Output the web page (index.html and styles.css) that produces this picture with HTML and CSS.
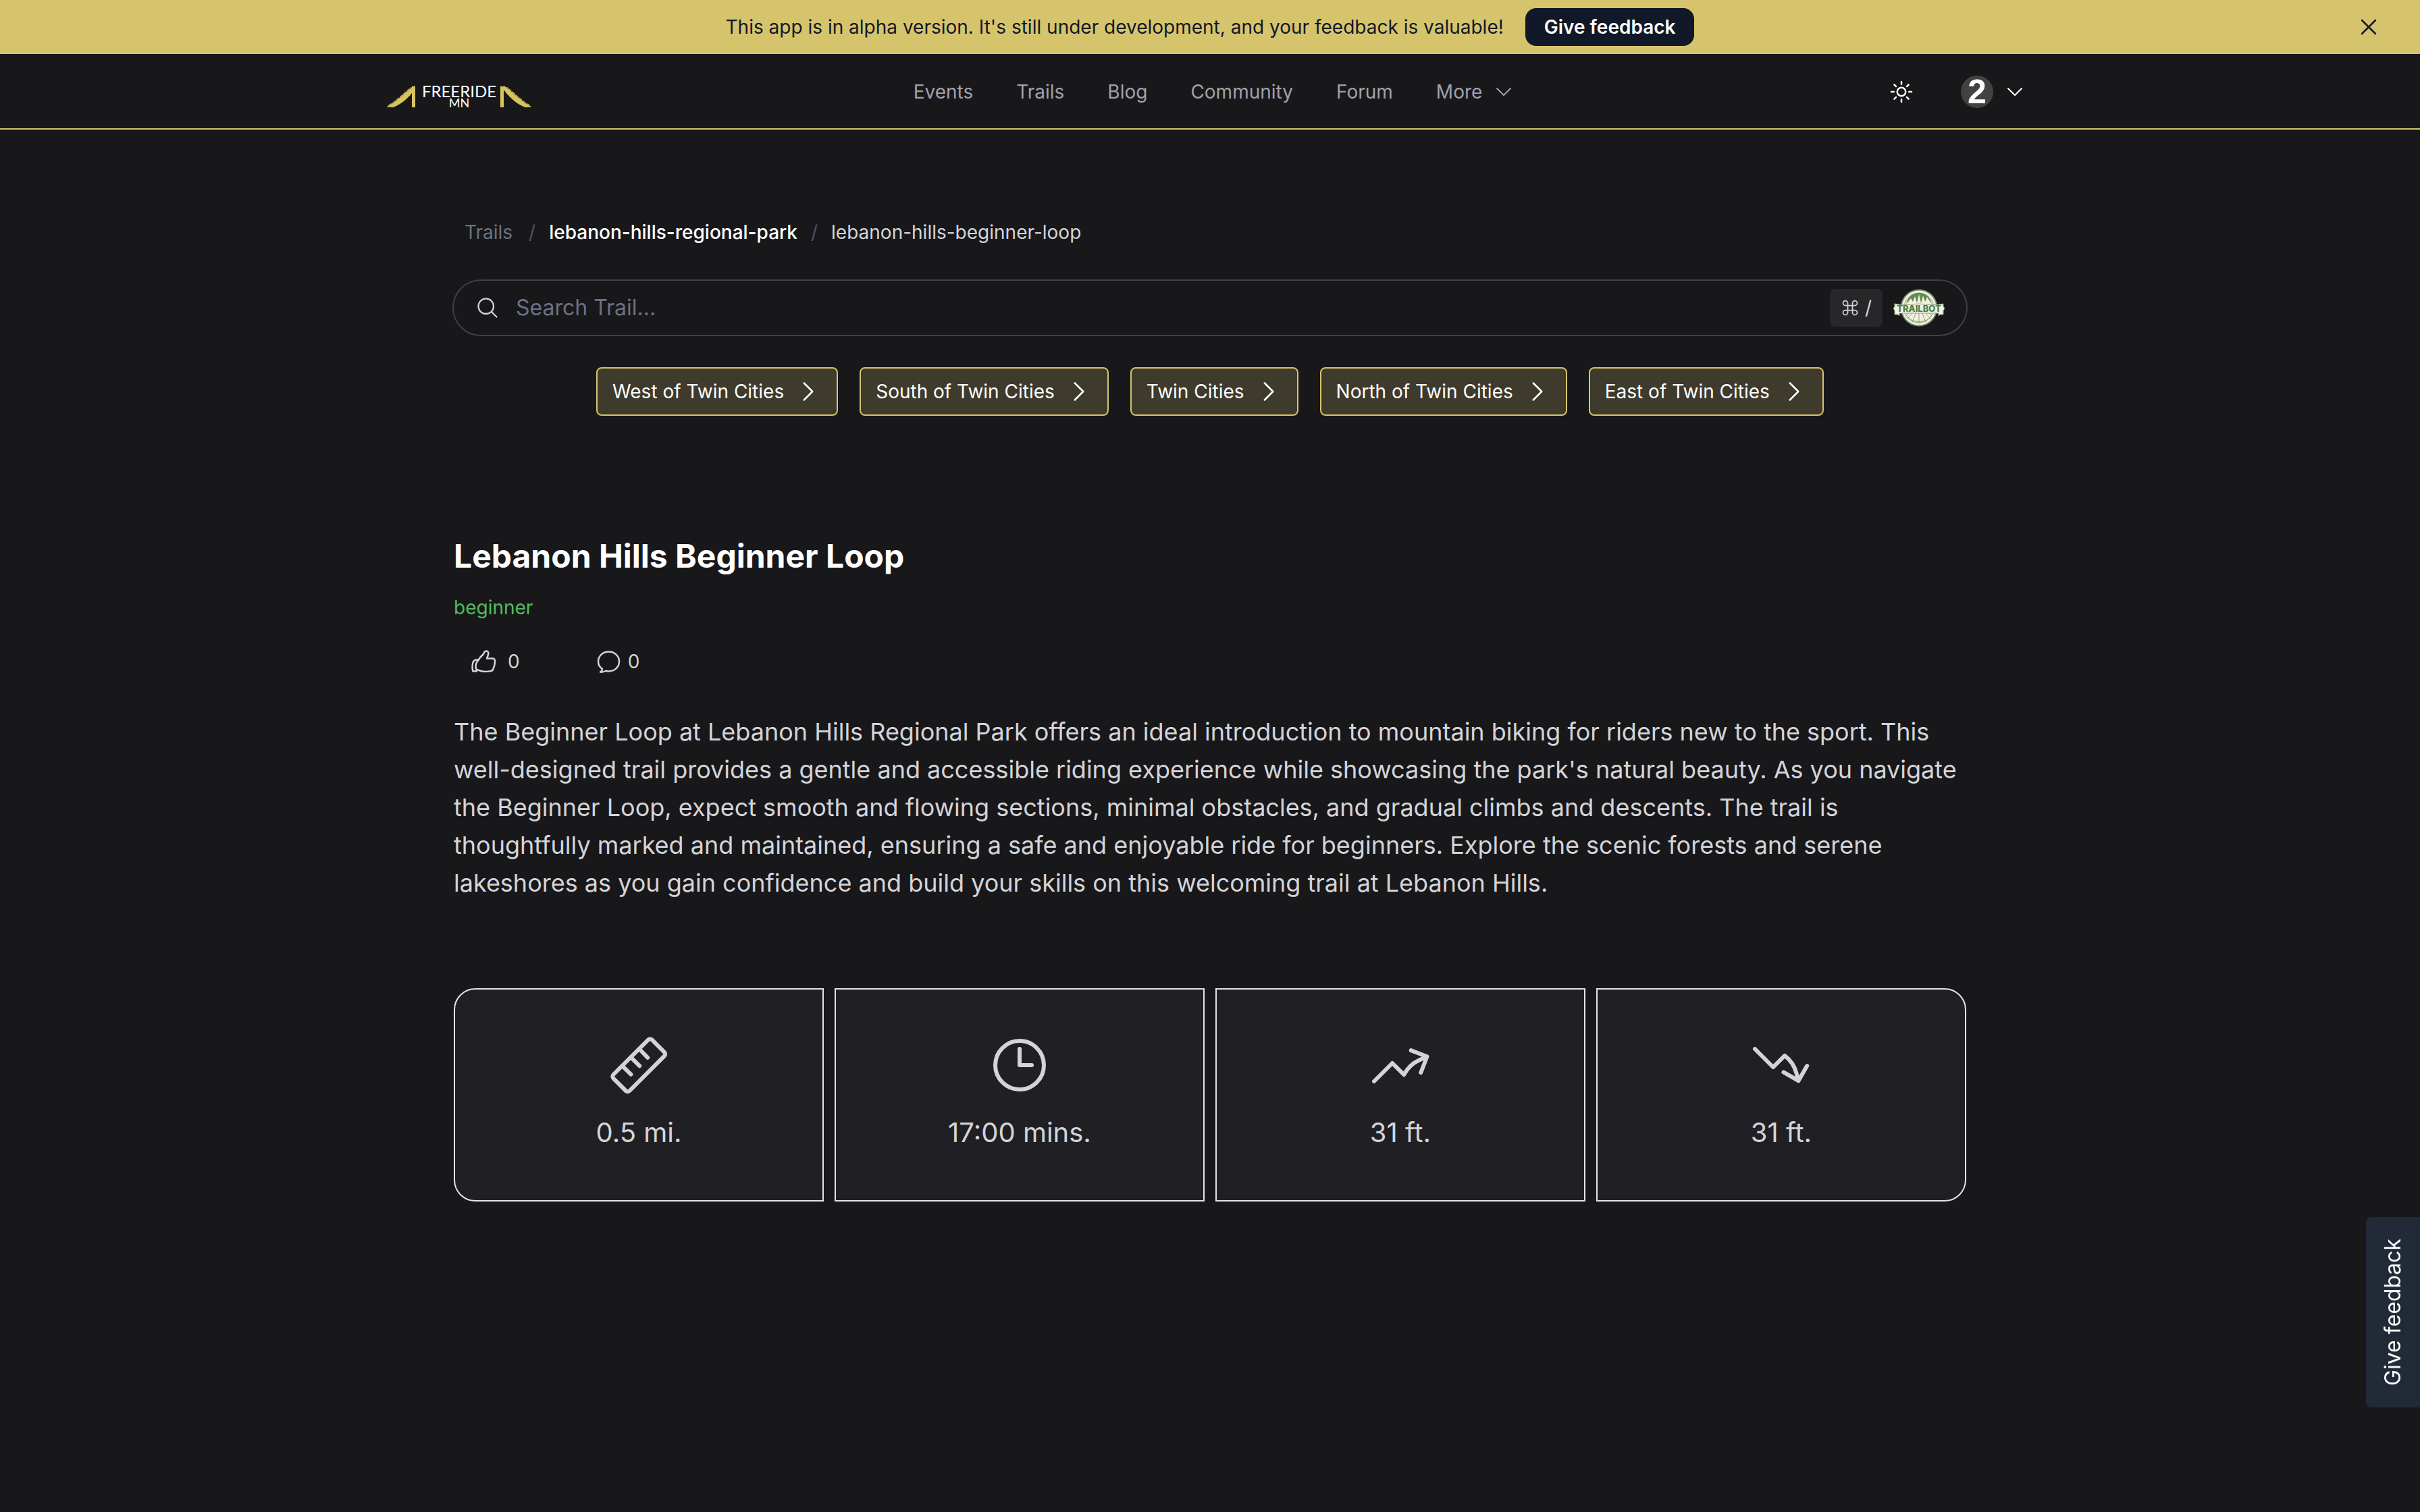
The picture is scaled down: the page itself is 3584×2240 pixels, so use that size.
FILE: index.html
```html
<!DOCTYPE html>
<html lang="en">
<head>
<meta charset="utf-8">
<title>Lebanon Hills Beginner Loop</title>
<link rel="stylesheet" href="styles.css">
</head>
<body>
<div class="banner">
  <p class="banner-text">This app is in alpha version. It's still under development, and your feedback is valuable!</p>
  <button class="banner-button" type="button">Give feedback</button>
  <button class="banner-close" type="button" aria-label="Dismiss">
    <svg class="icon-40" viewBox="0 0 24 24"><path d="M6 18 18 6M6 6l12 12"/></svg>
  </button>
</div>
<header class="header">
  <div class="header-inner">
    <a class="logo" href="#" aria-label="Freeride MN">
      <svg class="logo-art" viewBox="0 -8 240 48">
        <g fill="#d8c45f">
          <path d="M12 32.500C24 27 36 15 50 3.500L54 1V7C46 18 34 29 22 33Z"/>
          <path d="M50 2h5v31h-5z"/>
          <path d="M228 32.500C216 27 204 15 190 3.500L186 1V7C194 18 206 29 218 33Z"/>
          <path d="M181 2h5v31h-5z"/>
        </g>
        <path d="M16 30l7-4 6-5 7-6 8-7 5-4M224 30l-7-4-6-5-7-6-8-7-5-4" fill="none" stroke="#b8a552" stroke-width="2" stroke-dasharray="4 3"/>
        <text class="logo-name" x="120" y="18" text-anchor="middle">FREERIDE</text>
        <text class="logo-state" x="120" y="33" text-anchor="middle">MN</text>
      </svg>
    </a>
    <nav class="nav">
      <a href="#">Events</a>
      <a href="#">Trails</a>
      <a href="#">Blog</a>
      <a href="#">Community</a>
      <a href="#">Forum</a>
      <button class="nav-more" type="button">More
        <svg class="icon-32" viewBox="0 0 24 24"><path d="m19.500 8.250-7.500 7.500-7.500-7.500"/></svg>
      </button>
    </nav>
    <div class="account">
      <button class="plain" type="button" aria-label="Switch theme">
        <svg class="icon-40" viewBox="0 0 24 24"><path d="M12 3v2.250m6.364.386-1.591 1.591M21 12h-2.250m-.386 6.364-1.591-1.591M12 18.750V21m-4.773-4.227-1.591 1.591M5.250 12H3m4.227-4.773L5.636 5.636M15.750 12a3.750 3.750 0 1 1-7.500 0 3.750 3.750 0 0 1 7.500 0Z"/></svg>
      </button>
      <button class="plain profile" type="button" aria-label="Account menu">
        <span class="avatar">2</span>
        <svg class="icon-32" viewBox="0 0 24 24"><path d="m19.500 8.250-7.500 7.500-7.500-7.500"/></svg>
      </button>
    </div>
  </div>
</header>
<main class="main">
  <nav class="crumbs" aria-label="Breadcrumb">
    <a class="crumb-root" href="#">Trails</a>
    <span class="slash">/</span>
    <a class="crumb-park" href="#">lebanon-hills-regional-park</a>
    <span class="slash">/</span>
    <a class="crumb-here" href="#">lebanon-hills-beginner-loop</a>
  </nav>
  <form class="search">
    <label class="search-label" for="trail-search" aria-label="Search Trail">
      <svg class="icon-36" viewBox="0 0 24 24"><path d="m21 21-5.197-5.197m0 0A7.500 7.500 0 1 0 5.196 5.196a7.500 7.500 0 0 0 10.607 10.607Z"/></svg>
    </label>
    <input class="search-input" id="trail-search" type="text" placeholder="Search Trail...">
    <kbd class="shortcut">
      <svg class="command" viewBox="0 0 24 24"><path d="M9 9V6a3 3 0 1 0-3 3h12a3 3 0 1 0-3-3v12a3 3 0 1 0 3-3H6a3 3 0 1 0 3 3V9"/></svg>
      <span>/</span>
    </kbd>
    <button class="plain" type="button" aria-label="Trailbot">
      <svg class="trailbot" viewBox="0 0 76 56">
        <circle cx="38" cy="28" r="26" fill="#f4f0e2"/>
        <circle cx="38" cy="28" r="26.500" fill="none" stroke="#6f9160" stroke-width="2" stroke-dasharray="2 2"/>
        <circle cx="38" cy="28" r="22" fill="none" stroke="#7f9c70" stroke-width="1"/>
        <path d="M19 22C22 11 29 6 38 6s16 5 19 16l-4-5-3-5-3 7-3-9-3 11-3-13-3 13-3-10-3 8-3-5-3 4z" fill="#5f8a50" stroke="none"/>
        <path d="M38 34v17M34 34l-6 15M42 34l6 15M30 34l-9 10M46 34l9 10M26 34l-7 5M50 34l7 5M20 41c9 10 27 10 36 0" fill="none" stroke="#8ba57c" stroke-width="1"/>
        <path d="M2 22q12 3 36 0 24 3 36 0v4l2 3-2 3v6h-5l-2 2v-4H9v4l-2-2H2v-6l-2-3 2-3z" fill="#f4f0e2" stroke="#8ba57c" stroke-width="1"/>
        <text class="trailbot-name" x="38" y="34" text-anchor="middle">TRAILBOT</text>
      </svg>
    </button>
  </form>
  <div class="regions">
    <button class="region" type="button">West of Twin Cities <svg class="icon-40" viewBox="0 0 24 24"><path d="m8.250 4.500 7.500 7.500-7.500 7.500"/></svg></button>
    <button class="region" type="button">South of Twin Cities <svg class="icon-40" viewBox="0 0 24 24"><path d="m8.250 4.500 7.500 7.500-7.500 7.500"/></svg></button>
    <button class="region" type="button">Twin Cities <svg class="icon-40" viewBox="0 0 24 24"><path d="m8.250 4.500 7.500 7.500-7.500 7.500"/></svg></button>
    <button class="region" type="button">North of Twin Cities <svg class="icon-40" viewBox="0 0 24 24"><path d="m8.250 4.500 7.500 7.500-7.500 7.500"/></svg></button>
    <button class="region" type="button">East of Twin Cities <svg class="icon-40" viewBox="0 0 24 24"><path d="m8.250 4.500 7.500 7.500-7.500 7.500"/></svg></button>
  </div>
  <article class="trail">
    <h1 class="title">Lebanon Hills Beginner Loop</h1>
    <p class="level">beginner</p>
    <div class="reactions">
      <button class="plain reaction" type="button" aria-label="Like, 0">
        <svg class="reaction-icon" viewBox="-2 -3 40 40" stroke-width="2.500"><path d="M11 14.500C12 11.500 15 9 17.500 6.500 19 5 19 1.500 22 1.500c3 0 4 2.500 3 5.500l-2 5.500h8c3 0 4 1 4 4 0 5-1.500 10-4 14-4 1.500-12 2-17 .500-2-.500-4-2-6-2M11 14.500H7C3 15 1.500 20 1.500 25c0 3 .500 5 1 6.500H8L7.500 29C5.500 25 6.500 18 11 14.500"/></svg>
        <span>0</span>
      </button>
      <button class="plain comment" type="button" aria-label="Comments, 0">
        <svg class="reaction-icon" viewBox="-2 -3 40 40" stroke-width="2.500"><path d="M8 28C4.500 25.500 2 21.500 2 17 2 8.500 9 2.500 17.500 2.500S33 8.500 33 17s-7 14.500-15.500 14.500c-1.500 0-3 0-4.500-.500-2 1-5 2-8 1.500 2-1 3-2.500 3-4.500Z"/></svg>
        <span>0</span>
      </button>
    </div>
    <p class="description">The Beginner Loop at Lebanon Hills Regional Park offers an ideal introduction to mountain biking for riders new to the sport. This well-designed trail provides a gentle and accessible riding experience while showcasing the park's natural beauty. As you navigate the Beginner Loop, expect smooth and flowing sections, minimal obstacles, and gradual climbs and descents. The trail is thoughtfully marked and maintained, ensuring a safe and enjoyable ride for beginners. Explore the scenic forests and serene lakeshores as you gain confidence and build your skills on this welcoming trail at Lebanon Hills.</p>
    <ul class="stats">
      <li class="stat">
        <svg class="icon-96" viewBox="0 0 24 24"><path d="M15.500 2.600a1 1 0 0 1 1.400 0l4.600 4.600a1 1 0 0 1 0 1.400L8.600 21.500a1 1 0 0 1-1.400 0L2.600 16.900a1 1 0 0 1 0-1.400ZM5.900 12.300l3.200 3.100M9.100 9.100l3.200 3.200M12.200 6l3.100 3.200"/></svg>
        <span>0.5 mi.</span>
      </li>
      <li class="stat">
        <svg class="icon-96" viewBox="0 0 24 24"><path d="M12 6v6h4.500m4.500 0a9 9 0 1 1-18 0 9 9 0 0 1 18 0Z"/></svg>
        <span>17:00 mins.</span>
      </li>
      <li class="stat">
        <svg class="icon-96" viewBox="0 0 24 24"><path d="M2.250 18 9 11.250l4.306 4.306a11.950 11.950 0 0 1 5.814-5.518l2.740-1.220m0 0-5.940-2.281m5.940 2.280-2.280 5.941"/></svg>
        <span>31 ft.</span>
      </li>
      <li class="stat">
        <svg class="icon-96" viewBox="0 0 24 24"><path d="M2.250 6 9 12.750l4.286-4.286a11.948 11.948 0 0 1 4.306 6.430l.776 2.898m0 0 3.182-5.511m-3.182 5.510-5.511-3.181"/></svg>
        <span>31 ft.</span>
      </li>
    </ul>
  </article>
</main>
<button class="feedback-tab" type="button">Give feedback</button>
</body>
</html>
```
FILE: styles.css
```css
* {
  box-sizing: border-box;
}

body {
  margin: 0;
  min-height: 100vh;
  background: #18181b;
  color: #d4d4d8;
  font-family: Inter, "Liberation Sans", sans-serif;
  font-size: 28px;
  line-height: 40px;
}

h1, p, ul {
  margin: 0;
  padding: 0;
}

a {
  color: inherit;
  text-decoration: none;
}

button, input, kbd {
  font: inherit;
  color: inherit;
}

svg {
  display: block;
  flex: none;
  fill: none;
  stroke: currentColor;
  stroke-linecap: round;
  stroke-linejoin: round;
}

.icon-32 { width: 32px; height: 32px; }
.icon-36 { width: 36px; height: 36px; }
.icon-40 { width: 40px; height: 40px; }
.icon-96 { width: 96px; height: 96px; }

.icon-32, .icon-36, .icon-40, .icon-96, .command {
  stroke-width: 1.5;
}

.plain {
  padding: 0;
  border: 0;
  background: none;
}

/* Alpha notice */
.banner {
  position: relative;
  display: flex;
  align-items: center;
  justify-content: center;
  gap: 32px;
  padding: 12px 56px;
  background: #d6c46d;
  color: #111827;
}

.banner-button {
  padding: 8px 28px;
  border: 0;
  border-radius: 16px;
  background: #111827;
  color: #fff;
  font-weight: 600;
}

.banner-close {
  position: absolute;
  top: 20px;
  right: 56px;
  padding: 0;
  border: 0;
  background: none;
}

/* Site header */
.header {
  border-bottom: 2px solid #d6c46d;
}

.header-inner {
  display: flex;
  align-items: center;
  justify-content: space-between;
  max-width: 2560px;
  height: 110px;
  margin: 0 auto;
  padding: 2px 72px 0 48px;
}

.logo-art {
  width: 240px;
  height: 48px;
  margin-top: 12px;
  stroke: none;
}

.logo-name, .logo-state {
  fill: #fff;
  font-family: Lato, sans-serif;
}

.logo-name { font-size: 24px; }
.logo-state { font-size: 18px; }

.nav {
  display: flex;
  gap: 64px;
  color: #a1a1aa;
}

.nav-more {
  display: flex;
  align-items: center;
  gap: 16px;
  padding: 0;
  border: 0;
  background: none;
}

.account {
  display: flex;
  align-items: center;
  gap: 68px;
  color: #fff;
}

.profile {
  display: flex;
  align-items: center;
  gap: 16px;
}

.avatar {
  width: 48px;
  border-radius: 50%;
  background: #424242;
  color: #fff;
  font: bold 50px/48px "Liberation Sans", sans-serif;
}

/* Page column */
.main {
  max-width: 2240px;
  margin: 0 auto;
  padding: 132px 0 160px;
}

.crumbs {
  display: flex;
  gap: 20px;
  padding: 0 16px;
}

.crumb-root {
  margin-right: 4px;
  color: #6b7280;
}

.crumb-park { color: #fff; font-weight: 500; }
.slash { color: #4b5563; }

.search {
  display: flex;
  align-items: center;
  gap: 16px;
  height: 84px;
  margin: 50px -2px 0;
  padding: 0 32px;
  border: 2px solid #3f3f46;
  border-radius: 42px;
}

.search-input {
  flex: 1;
  min-width: 0;
  padding: 0 8px;
  border: 0;
  outline: 0;
  background: none;
  font-size: 32px;
}

.search-input::placeholder {
  color: #6b7280;
  opacity: 1;
}

.shortcut {
  display: flex;
  align-items: center;
  gap: 8px;
  padding: 8px 16px;
  border-radius: 8px;
  background: #27272a;
}

.command {
  width: 28px;
  height: 28px;
}

.trailbot {
  width: 76px;
  height: 56px;
}

.trailbot-name {
  fill: #4f8044;
  stroke: none;
  font: 800 13px Inter, sans-serif;
}

.regions {
  display: flex;
  justify-content: center;
  gap: 32px;
  margin-top: 46px;
}

.region {
  display: flex;
  align-items: center;
  gap: 16px;
  padding: 14px 22px;
  border: 2px solid #d6c46d;
  border-radius: 8px;
  background: #3e3a2c;
  color: #fff;
}

/* Trail details */
.trail {
  margin-top: 176px;
}

.title {
  color: #fff;
  font-size: 48px;
  font-weight: 700;
  line-height: 64px;
}

.level {
  margin-top: 24px;
  color: #52bd5c;
}

.reactions {
  display: flex;
  gap: 88px;
  margin-top: 36px;
}

.reaction, .comment {
  display: flex;
  align-items: center;
  height: 48px;
}

.reaction {
  gap: 16px;
  padding: 0 24px;
}

.comment {
  gap: 8px;
}

.reaction-icon {
  width: 40px;
  height: 40px;
}

.description {
  margin-top: 52px;
  font-size: 36px;
  line-height: 56px;
}

.stats {
  display: grid;
  grid-template-columns: repeat(4, 1fr);
  gap: 16px;
  margin-top: 128px;
  list-style: none;
}

.stat {
  display: flex;
  flex-direction: column;
  align-items: center;
  gap: 16px;
  padding: 64px 0;
  border: 2px solid #e4e4e7;
  background: #202024;
  font-size: 40px;
  line-height: 72px;
}

.stat:first-child { border-radius: 32px 0 0 32px; }
.stat:last-child { border-radius: 0 32px 32px 0; }

.feedback-tab {
  position: fixed;
  right: 0;
  bottom: 155px;
  padding: 32px 20px;
  border: 0;
  border-radius: 0 8px 8px 0;
  background: #222a38;
  color: #fff;
  font-size: 32px;
  writing-mode: vertical-rl;
  rotate: 180deg;
}
```
